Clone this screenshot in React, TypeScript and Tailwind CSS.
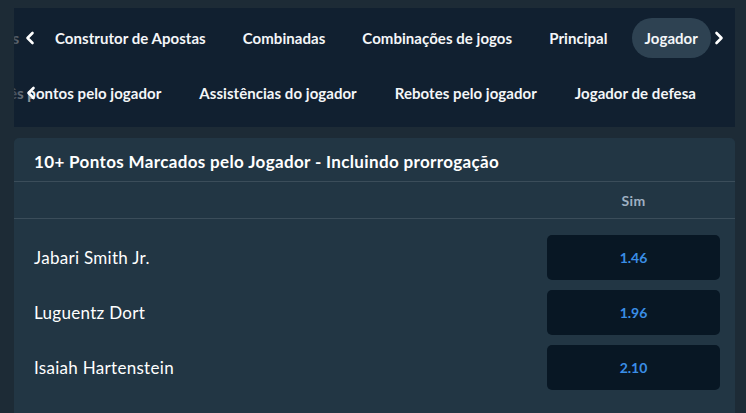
import React from 'react';

const topTabs = ['Construtor de Apostas', 'Combinadas', 'Combinações de jogos', 'Principal', 'Jogador'];
const subTabs = ['Assistências do jogador', 'Rebotes pelo jogador', 'Jogador de defesa'];

const rows = [
  { name: 'Jabari Smith Jr.', odd: '1.46' },
  { name: 'Luguentz Dort', odd: '1.96' },
  { name: 'Isaiah Hartenstein', odd: '2.10' },
];

const Chevron: React.FC<{ dir: 'left' | 'right' }> = ({ dir }) => (
  <svg width="12" height="14" viewBox="0 0 12 14" fill="none">
    <path
      d={dir === 'left' ? 'M8.5 2 L3.5 7 L8.5 12' : 'M3.5 2 L8.5 7 L3.5 12'}
      stroke="white"
      strokeWidth="2.6"
      strokeLinecap="round"
      strokeLinejoin="round"
    />
  </svg>
);

const App: React.FC = () => {
  return (
    <div
      className="h-[413px] w-[746px] overflow-hidden bg-[#1d2b36] pl-[14px] pr-[11px] pt-[8px]"
      style={{ fontFamily: 'Lato, "Open Sans", sans-serif' }}
    >
      {/* tabs panel */}
      <div className="bg-[#112030] pt-[10px] pb-[14px]">
        <div className="relative h-[40px] overflow-hidden">
          <div className="flex items-center h-full gap-[11px] whitespace-nowrap">
            <div className="w-[17px] shrink-0 overflow-hidden flex justify-end">
              <span className="pr-[12px] text-[15px] font-bold text-white whitespace-nowrap">Apostas especiais</span>
            </div>
            {topTabs.map((t) => (
              <div
                key={t}
                className={`h-[40px] flex items-center px-[13px] rounded-full text-[15px] tracking-[0.05px] font-bold text-[#f4f6f8] ${
                  t === 'Jogador' ? 'bg-[#2e4252]' : ''
                }`}
              >
                {t}
              </div>
            ))}
          </div>
          <div className="absolute left-0 top-0 bottom-0 w-[10px] bg-gradient-to-r from-[#112030]/80 to-[#112030]/50" />
          <div className="absolute left-[10px] top-0 bottom-0 flex items-center">
            <Chevron dir="left" />
          </div>
          <div className="absolute right-[10px] top-0 bottom-0 flex items-center">
            <Chevron dir="right" />
          </div>
        </div>

        <div className="relative h-[40px] overflow-hidden mt-[15px]">
          <div className="flex items-center h-full gap-[12px] whitespace-nowrap -ml-[31px]">
            <div className="px-[13px] text-[15px] tracking-[0.05px] font-bold text-[#f4f6f8]">Três pontos pelo jogador</div>
            {subTabs.map((t) => (
              <div key={t} className="px-[13px] text-[15px] tracking-[0.05px] font-bold text-[#f4f6f8]">
                {t}
              </div>
            ))}
          </div>
          <div className="absolute left-0 top-0 bottom-0 w-[18px] bg-gradient-to-r from-[#112030]/80 to-[#112030]/40" />
          <div className="absolute left-[11px] top-0 bottom-0 flex items-center">
            <Chevron dir="left" />
          </div>
        </div>
      </div>

      {/* market card */}
      <div className="mt-[11px] bg-[#223644] rounded-t-[5px] pb-[30px]">
        <div className="h-[44px] flex items-center pt-[4px] px-[20px] border-b border-[#3b4d5a]">
          <h2 className="text-[17px] tracking-[0.35px] font-bold text-white">
            10+ Pontos Marcados pelo Jogador - Incluindo prorrogação
          </h2>
        </div>
        <div className="h-[37px] flex items-center justify-end pr-[15px] border-b border-[#3b4d5a]">
          <span className="w-[173px] text-center text-[14px] tracking-[0.3px] font-bold text-[#9fb0c2]">Sim</span>
        </div>
        <div className="pt-[16px] pl-[20px] pr-[15px] flex flex-col gap-[10px]">
          {rows.map((r) => (
            <div key={r.name} className="flex items-center justify-between">
              <span className="text-[17px] tracking-[0.3px] text-white">{r.name}</span>
              <button className="w-[173px] h-[45px] rounded-[5px] bg-[#081724] text-[14px] font-bold text-[#3a8ee6]">
                {r.odd}
              </button>
            </div>
          ))}
        </div>
      </div>
    </div>
  );
};

export default App;
